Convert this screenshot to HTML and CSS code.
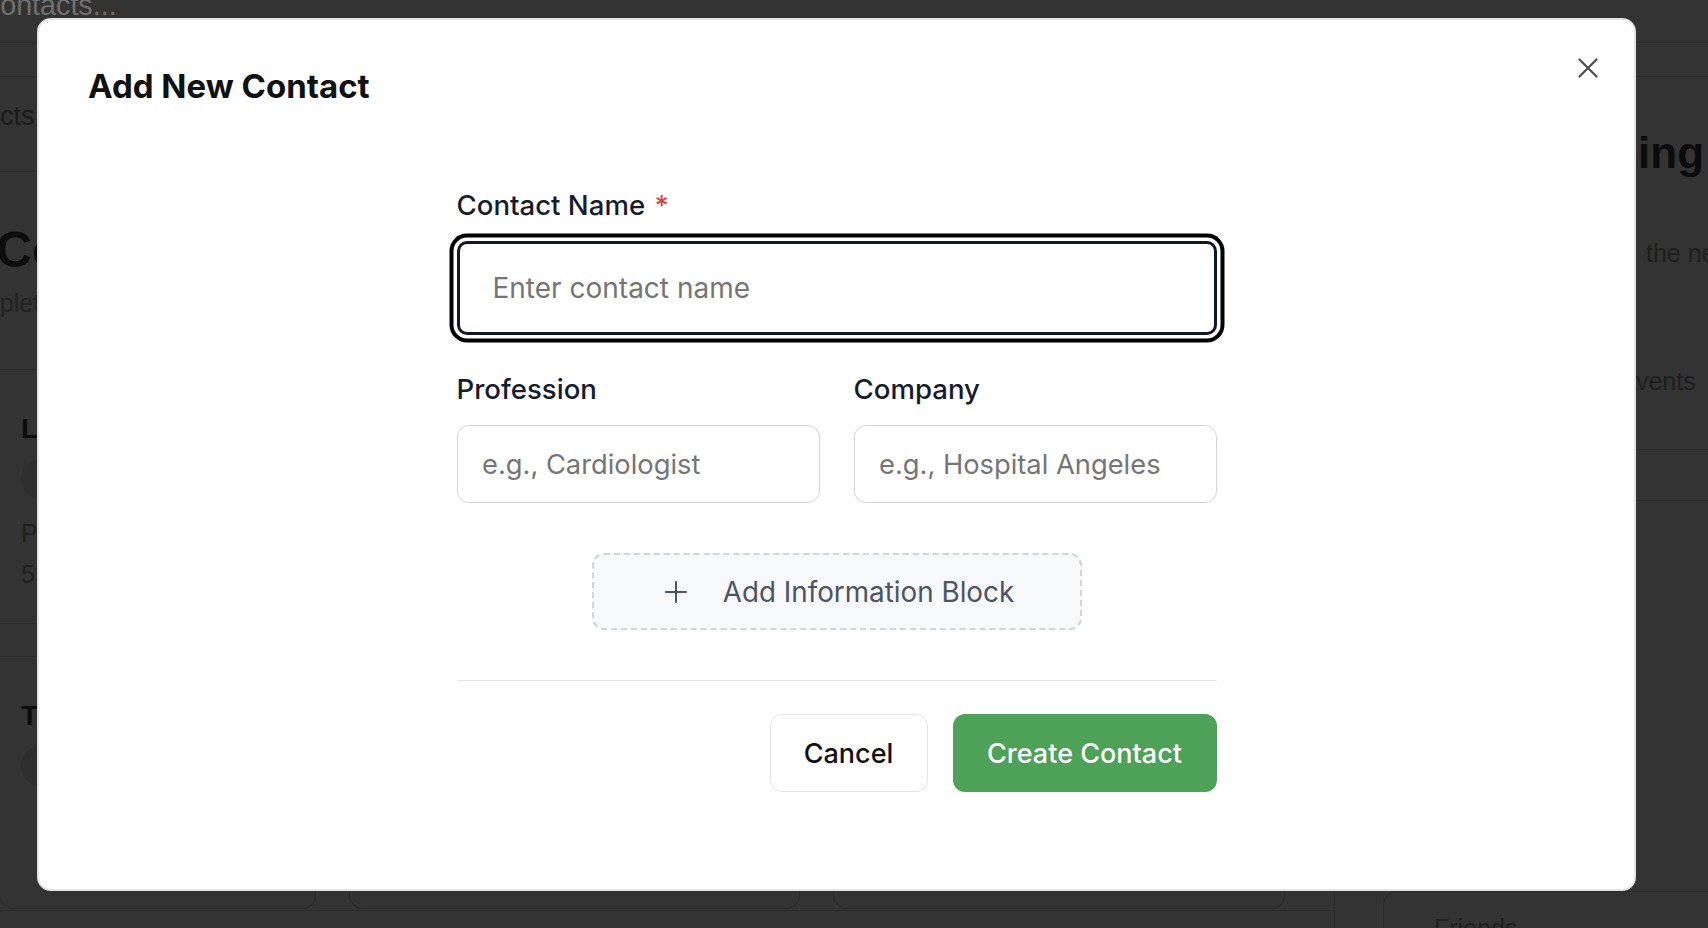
FILE: index.html
```html
<!DOCTYPE html>
<html lang="en">
<head>
<meta charset="utf-8">
<title>Add New Contact</title>
<link rel="stylesheet" href="styles.css">
</head>
<body>
<div class="app">
  <div class="search-row"><span class="search-text">Search contacts...</span></div>
  <div class="sub-row"></div>
  <div class="main">
    <div class="left">
      <div class="nav-row"><span class="nav-tab">Contacts</span></div>
      <div class="page-head">
        <h1 class="page-title">Contacts</h1>
        <p class="page-sub">Complete list</p>
      </div>
      <div class="card">
        <div class="card-title">Laura Méndez</div>
        <div class="avatar"></div>
        <div class="card-line">Pediatra</div>
        <div class="card-line">55 1234 5678</div>
      </div>
      <div class="card-gap"></div>
      <div class="card">
        <div class="card-title">Tomás Ruiz</div>
        <div class="avatar"></div>
      </div>
      <div class="card-row">
        <div class="mini-card first"></div>
        <div class="mini-card"></div>
        <div class="mini-card"></div>
      </div>
    </div>
    <aside class="right">
      <h2 class="side-title">Upcoming</h2>
      <p class="side-sub">the next dates</p>
      <p class="side-events">events</p>
      <div class="side-line"></div>
      <div class="side-line second"></div>
      <div class="side-bottom"><div class="side-card"><span>Friends</span></div></div>
    </aside>
  </div>
</div>

<div class="overlay">
  <div class="modal" role="dialog" aria-labelledby="modal-title">
    <h2 class="modal-title" id="modal-title">Add New Contact</h2>
    <button class="close-btn" type="button" aria-label="Close">
      <svg width="20" height="20" viewBox="0 0 20 20" fill="none" stroke="#4d4d4d" stroke-width="2.2" stroke-linecap="round">
        <path d="M1.5 1.5 L18.5 18.5 M18.5 1.5 L1.5 18.5"/>
      </svg>
    </button>

    <form class="form">
      <label class="label" for="name">Contact Name <span class="req">*</span></label>
      <input class="input main-input" id="name" type="text" placeholder="Enter contact name">

      <div class="two-col">
        <div class="field">
          <label class="label" for="profession">Profession</label>
          <input class="input small-input" id="profession" type="text" placeholder="e.g., Cardiologist">
        </div>
        <div class="field">
          <label class="label" for="company">Company</label>
          <input class="input small-input" id="company" type="text" placeholder="e.g., Hospital Angeles">
        </div>
      </div>

      <button class="add-block" type="button">
        <svg class="plus" width="22" height="22" viewBox="0 0 22 22" fill="none" stroke="#4b5563" stroke-width="2" stroke-linecap="round">
          <path d="M11 1 V21 M1 11 H21"/>
        </svg>
        <span>Add Information Block</span>
      </button>

      <div class="divider"></div>

      <div class="actions">
        <button class="btn btn-cancel" type="button">Cancel</button>
        <button class="btn btn-create" type="button">Create Contact</button>
      </div>
    </form>
  </div>
</div>
</body>
</html>
```

FILE: styles.css
```css
* {
  box-sizing: border-box;
  margin: 0;
  padding: 0;
}

html, body {
  width: 1708px;
  height: 928px;
  overflow: hidden;
}

body {
  background: #333333;
  font-family: "Liberation Sans", Arial, sans-serif;
}

/* ---------- dimmed background page ---------- */
.app {
  width: 1708px;
  height: 928px;
  overflow: hidden;
}

.search-row {
  height: 43px;
  border-bottom: 1px solid #2b2b2b;
  overflow: hidden;
}

.search-text {
  display: block;
  margin: -11px 0 0 -113px;
  font-size: 28.7px;
  line-height: 33px;
  color: #6f6f6f;
  white-space: nowrap;
}

.sub-row {
  height: 34px;
  border-bottom: 1px solid #2b2b2b;
}

.main {
  display: grid;
  grid-template-columns: 1334px 1fr;
  height: 851px;
}

.left {
  overflow: hidden;
}

.nav-row {
  height: 95px;
  display: flex;
  align-items: center;
  padding-bottom: 16px;
  border-bottom: 1px solid #2b2b2b;
}

.nav-tab {
  margin-left: -72px;
  font-size: 27px;
  color: #1c1c1c;
}

.page-head {
  height: 198px;
  padding-top: 50px;
  border-bottom: 1px solid #2b2b2b;
}

.page-title {
  margin-left: -4px;
  font-size: 50px;
  line-height: 56px;
  font-weight: 700;
  color: #0c0c0c;
  white-space: nowrap;
}

.page-sub {
  margin: 11px 0 0 -53px;
  font-size: 25px;
  color: #222;
  white-space: nowrap;
}

.card {
  padding: 43px 0 0 21px;
  height: 254px;
  border-bottom: 1px solid #2b2b2b;
}

.card-title {
  font-size: 28px;
  font-weight: 700;
  color: #0c0c0c;
  white-space: nowrap;
}

.avatar {
  width: 40px;
  height: 40px;
  border-radius: 50%;
  background: #2e2e2e;
  margin: 14px 0 14px;
}

.card-line {
  font-size: 25px;
  line-height: 41px;
  color: #202020;
  white-space: nowrap;
}

.card-gap {
  height: 33px;
  border-bottom: 1px solid #2b2b2b;
}

.card-row {
  display: grid;
  grid-template-columns: 316px 451px 452px;
  column-gap: 33px;
  height: 18px;
  margin-top: -20px;
}

.mini-card {
  border: 1px solid #2a2a2a;
  border-top: none;
  border-radius: 0 0 14px 14px;
}

.mini-card.first {
  border-left: none;
}

.right {
  border-left: 1px solid #2c2c2c;
  overflow: hidden;
}

.side-title {
  margin: 48px 0 0 154px;
  font-size: 44px;
  line-height: 56px;
  font-weight: 700;
  color: #0b0b0b;
  white-space: nowrap;
}

.side-sub {
  margin: 58px 0 0 311px;
  font-size: 25px;
  line-height: 29px;
  color: #1f1f1f;
  white-space: nowrap;
}

.side-events {
  margin: 99px 0 0 287px;
  font-size: 25px;
  line-height: 29px;
  color: #1f1f1f;
  white-space: nowrap;
}

.side-line {
  margin-top: 53px;
  border-top: 1px solid #2b2b2b;
}

.side-line.second {
  margin-top: 50px;
}

.side-bottom {
  margin-top: 390px;
  padding-left: 48px;
}

.side-card {
  border-left: 1px solid #2b2b2b;
  border-top: 1px solid #2b2b2b;
  border-radius: 14px 0 0 0;
  height: 80px;
  padding: 22px 0 0 50px;
  font-size: 25px;
  color: #1f1f1f;
}

/* ---------- modal ---------- */
.overlay {
  position: fixed;
  inset: 0;
  padding: 18px 0 0 37px;
}

.modal {
  position: relative;
  width: 1599px;
  height: 873px;
  background: #ffffff;
  border: 2px solid #e4e4e4;
  border-radius: 14px;
  padding: 46px 49px 0;
  font-family: Inter, "Noto Sans", sans-serif;
}

.modal-title {
  font-size: 33px;
  line-height: 40px;
  font-weight: 700;
  letter-spacing: 0;
  color: #111111;
}

.close-btn {
  position: absolute;
  top: 32px;
  right: 30px;
  width: 32px;
  height: 32px;
  border: none;
  background: transparent;
  display: flex;
  align-items: center;
  justify-content: center;
}

.form {
  width: 760px;
  margin: 79px auto 0;
}

.label {
  display: block;
  font-size: 27.6px;
  line-height: 40px;
  font-weight: 500;
  color: #161c2b;
  margin-bottom: 16px;
}

.req {
  color: #e53e3e;
  margin-left: 2px;
}

.input {
  display: block;
  width: 100%;
  font-family: Inter, "Noto Sans", sans-serif;
  color: #111;
  background: #fff;
  outline: none;
}

.input::placeholder {
  color: #757575;
}

.main-input {
  height: 94px;
  font-size: 28px;
  border: 3px solid #111827;
  border-radius: 10px;
  padding: 0 33px;
  box-shadow: 0 0 0 3.5px #ffffff, 0 0 0 7.5px #000000;
}

.two-col {
  display: grid;
  grid-template-columns: 1fr 1fr;
  column-gap: 34px;
  margin-top: 34px;
}

.small-input {
  height: 78px;
  font-size: 27.3px;
  border: 1.5px solid #d3d5da;
  border-radius: 12px;
  padding: 0 24.5px;
}

.add-block {
  display: flex;
  align-items: center;
  justify-content: center;
  gap: 36px;
  width: 490px;
  height: 77px;
  margin: 50px auto 0;
  padding-left: 6px;
  background: #f8f9fb;
  border: 2px dashed #d2d5da;
  border-radius: 12px;
  font-family: Inter, "Noto Sans", sans-serif;
  font-size: 27.8px;
  color: #4b5563;
}

.plus {
  flex: none;
}

.divider {
  margin-top: 50px;
  height: 1px;
  background: #e0e2e6;
}

.actions {
  display: flex;
  justify-content: flex-end;
  gap: 25px;
  margin-top: 33px;
}

.btn {
  height: 78px;
  border-radius: 12px;
  font-family: Inter, "Noto Sans", sans-serif;
  font-size: 27px;
  font-weight: 500;
}

.btn-cancel {
  width: 158px;
  background: #ffffff;
  border: 1.5px solid #e3e4e8;
  color: #111111;
}

.btn-create {
  width: 264px;
  background: #4ea258;
  border: none;
  color: #ffffff;
}
```
